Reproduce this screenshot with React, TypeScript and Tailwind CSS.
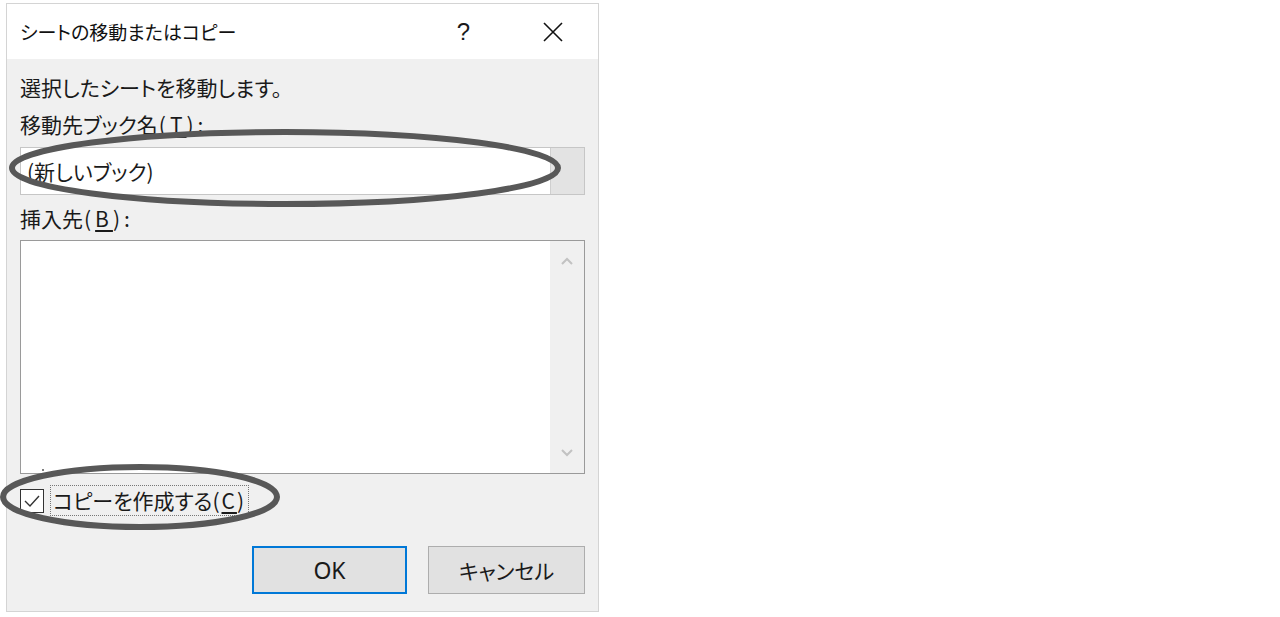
import React from "react";

const jp = { fontFamily: '"Noto Sans CJK JP", "Noto Sans", sans-serif', fontFeatureSettings: '"palt"' };

export default function App() {
  return (
    <div className="relative w-[1280px] h-[617px] bg-white overflow-hidden text-[#1a1a1a]" style={jp}>
      <div className="ml-[6px] mt-[3px] w-[593px] h-[609px] border border-[#d4d4d4] bg-[#f0f0f0] flex flex-col">
        {/* title bar */}
        <div className="h-[55px] bg-white flex items-center pl-[13px] shrink-0">
          <div className="text-[19px] leading-none text-[#111]">シートの移動またはコピー</div>
          <div className="ml-auto flex items-center">
            <span className="text-[24px] leading-none mr-[72px]" style={{ fontFamily: '"Liberation Sans", sans-serif' }}>?</span>
            <svg width="22" height="22" viewBox="0 0 22 22" className="mr-[34px]">
              <path d="M2 2 L20 20 M20 2 L2 20" stroke="#111" strokeWidth="1.6" />
            </svg>
          </div>
        </div>
        {/* body */}
        <div className="flex flex-col px-[13px] pt-[10px]">
          <div className="h-[37px] flex items-center text-[21px] leading-none">選択したシートを移動します。</div>
          <div className="h-[37px] flex items-center text-[21px] leading-none">
            移動先ブック名<span className="tracking-[4px] ml-[1px]">(<span className="underline underline-offset-[3px]">T</span>):</span>
          </div>
          <div className="mt-[4px] h-[48px] flex bg-white border border-[#c6c6c6]">
            <div className="flex-1 flex items-center pl-[6px] text-[21px] leading-none">(新しいブック)</div>
            <div className="w-[34px] h-full bg-[#e3e3e3] border-l border-[#cfcfcf]" />
          </div>
          <div className="h-[45px] flex items-center text-[21px] leading-none pt-[2px]">
            挿入先<span className="tracking-[4px] ml-[1px]">(<span className="underline underline-offset-[3px]">B</span>):</span>
          </div>
          <div className="h-[234px] flex bg-white border border-[#9a9a9a]">
            <div className="flex-1" />
            <div className="w-[34px] h-full bg-[#f0f0f0] flex flex-col items-center justify-between py-[16px]">
              <svg width="12" height="8" viewBox="0 0 12 8">
                <path d="M1 7 L6 2 L11 7" fill="none" stroke="#c2c2c2" strokeWidth="2" />
              </svg>
              <svg width="12" height="8" viewBox="0 0 12 8">
                <path d="M1 1 L6 6 L11 1" fill="none" stroke="#c2c2c2" strokeWidth="2" />
              </svg>
            </div>
          </div>
          <div className="mt-[11px] h-[31px] flex items-center">
            <div className="w-[24px] h-[24px] border border-[#333] bg-white flex items-center justify-center">
              <svg width="18" height="14" viewBox="0 0 18 14">
                <path d="M2 7 L7 12 L16 2" fill="none" stroke="#333" strokeWidth="1.4" />
              </svg>
            </div>
            <div className="ml-[6px] h-[31px] px-[2px] flex items-center border border-dotted border-[#777] text-[21px] leading-none">
              コピーを作成する<span className="tracking-[2px]">(<span className="underline underline-offset-[3px]">C</span>)</span>
            </div>
          </div>
          <div className="mt-[30px] flex justify-end gap-[21px]">
            <button className="w-[155px] h-[48px] bg-[#e1e1e1] border-2 border-[#0078d7] text-[23px] leading-none" style={{ fontFamily: '"Noto Sans", sans-serif' }}>
              OK
            </button>
            <button className="w-[157px] h-[48px] bg-[#e1e1e1] border border-[#adadad] text-[21px] leading-none" style={jp}>
              キャンセル
            </button>
          </div>
        </div>
      </div>
      {/* annotation ellipses */}
      <svg className="absolute left-0 top-0 pointer-events-none" width="1280" height="617">
        <ellipse cx="285" cy="168" rx="273" ry="36" fill="none" stroke="#585858" strokeWidth="6" />
        <ellipse cx="140" cy="497" rx="137" ry="30" fill="none" stroke="#585858" strokeWidth="6" />
        <circle cx="43" cy="470" r="1" fill="#555" />
      </svg>
    </div>
  );
}
